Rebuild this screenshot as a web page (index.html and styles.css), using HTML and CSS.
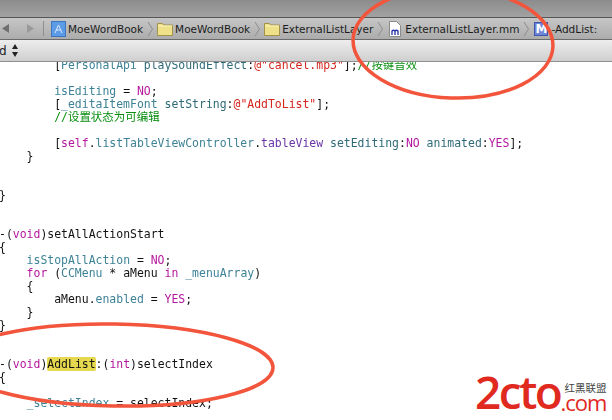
FILE: index.html
```html
<!DOCTYPE html>
<html lang="en">
<head>
<meta charset="utf-8">
<title>ExternalListLayer.mm</title>
<link rel="stylesheet" href="styles.css">
</head>
<body>
<div class="window">
  <div class="titlebar"></div>
  <nav class="jumpbar">
    <div class="nav-arrows">
      <svg class="arrow" width="9" height="11" viewBox="0 0 9 11"><path d="M8 1v9L1 5.500z"/></svg>
      <svg class="arrow arrow-off" width="9" height="11" viewBox="0 0 9 11"><path d="M1 1v9l7-4.500z"/></svg>
    </div>
    <span class="divider"></span>
    <svg class="icon" width="15" height="16" viewBox="0 0 15 16"><rect x=".5" y=".5" width="14" height="15" fill="#5c9be6" stroke="#3f74c0"/><path d="M4 12l3.500-8L11 12M5 9h5" fill="none" stroke="#dbe9fb" stroke-width="1"/></svg>
    <span class="crumb crumb-first">MoeWordBook</span>
    <svg class="chev" width="7" height="16" viewBox="0 0 7 16"><path d="M1 1l4.500 7L1 15" fill="none" stroke="#8d8d8d"/></svg>
    <svg class="icon" width="16" height="14" viewBox="0 0 16 14"><path d="M.5 13.500V1.500h5l1 1.500h9v10.500z" fill="#efe08a" stroke="#a3924a"/><path d="M1 4h14" stroke="#fbf3bd"/></svg>
    <span class="crumb">MoeWordBook</span>
    <svg class="chev" width="7" height="16" viewBox="0 0 7 16"><path d="M1 1l4.500 7L1 15" fill="none" stroke="#8d8d8d"/></svg>
    <svg class="icon" width="16" height="14" viewBox="0 0 16 14"><path d="M.5 13.500V1.500h5l1 1.500h9v10.500z" fill="#efe08a" stroke="#a3924a"/><path d="M1 4h14" stroke="#fbf3bd"/></svg>
    <span class="crumb">ExternalListLayer</span>
    <svg class="chev chev-file" width="7" height="16" viewBox="0 0 7 16"><path d="M1 1l4.500 7L1 15" fill="none" stroke="#8d8d8d"/></svg>
    <svg class="icon" width="12" height="16" viewBox="0 0 12 16"><path d="M.5.500h7l4 4v11H.5z" fill="#fff" stroke="#8a8a8a"/><rect x="1.500" y="7" width="9" height="7" fill="#fff"/><path d="M3 14V9.500M3 10q1.500-1.500 3 0v4M6 10q1.500-1.500 3 0v4" fill="none" stroke="#1f2fa8" stroke-width="1.300"/></svg>
    <span class="crumb crumb-file">ExternalListLayer.mm</span>
    <svg class="chev chev-method" width="7" height="16" viewBox="0 0 7 16"><path d="M1 1l4.500 7L1 15" fill="none" stroke="#8d8d8d"/></svg>
    <span class="method-badge">M</span>
    <span class="crumb crumb-last">-AddList:</span>
  </nav>
  <div class="filterbar">
    <span class="filter-text">d</span>
    <svg class="stepper" width="6" height="13" viewBox="0 0 6 13"><path d="M3 0l3 5H0zM0 8h6l-3 5z"/></svg>
  </div>
  <main class="editor">
<pre class="code"><code>        [<span class="iv">PersonalApi</span> <span class="me">playSoundEffect</span>:<span class="st">@"cancel.mp3"</span>];<span class="co">//按键音效</span>

        <span class="iv">isEditing</span> = <span class="kw">NO</span>;
        [<span class="iv">_editaItemFont</span> <span class="me">setString</span>:<span class="st">@"AddToList"</span>];
        <span class="co">//设置状态为可编辑</span>

        [<span class="kw">self</span>.<span class="iv">listTableViewController</span>.<span class="pu">tableView</span> <span class="me">setEditing</span>:<span class="kw">NO</span> <span class="me">animated</span>:<span class="kw">YES</span>];
    }


}


-(<span class="kw">void</span>)setAllActionStart
{
    <span class="iv">isStopAllAction</span> = <span class="kw">NO</span>;
    <span class="kw">for</span> (<span class="iv">CCMenu</span> * aMenu <span class="kw">in</span> <span class="iv">_menuArray</span>)
    {
        aMenu.<span class="iv">enabled</span> = <span class="kw">YES</span>;
    }
}


-(<span class="kw">void</span>)<mark class="hit">AddList</mark>:(<span class="kw">int</span>)selectIndex
{

    <span class="iv">_selectIndex</span> = selectIndex;</code></pre>
  </main>
  <svg class="annotations" width="612" height="420" viewBox="0 0 612 420">
    <ellipse class="ring" cx="453" cy="43" rx="100" ry="55" transform="rotate(2 453 43)"/>
    <ellipse class="ring" cx="114" cy="365" rx="159" ry="41" transform="rotate(1 114 365)"/>
  </svg>
  <div class="watermark">
    <span class="wm-main">2cto</span>
    <span class="wm-side">
      <span class="wm-cn">红黑联盟</span>
      <span class="wm-com">.com</span>
    </span>
  </div>
</div>
</body>
</html>
```

FILE: styles.css
```css
* { box-sizing: border-box; }
html, body { margin: 0; padding: 0; background: #fff; }
.window {
  position: relative;
  width: 612px;
  height: 420px;
  overflow: hidden;
  display: flex;
  flex-direction: column;
  font-family: "DejaVu Sans", sans-serif;
}
.titlebar {
  height: 18px;
  flex: none;
  background: linear-gradient(#8c8c8c, #a2a2a2);
  border-bottom: 1px solid #555;
}
.jumpbar {
  height: 22px;
  flex: none;
  display: flex;
  align-items: center;
  background: linear-gradient(#c6c6c6, #acacac);
  border-bottom: 1px solid #6a6a6a;
  white-space: nowrap;
  padding-left: 1px;
}
.nav-arrows { display: flex; gap: 16px; width: 42px; flex: none; }
.arrow { fill: #6f6f6f; flex: none; }
.arrow-off { fill: #9a9a9a; }
.divider { width: 1px; height: 15px; background: #8e8e8e; margin-right: 7px; flex: none; }
.icon { flex: none; }
.crumb { font-size: 10.500px; color: #1c1c1c; margin-left: 2px; }
.crumb-first { margin-left: 2px; }
.crumb-file { margin-left: 4px; }
.chev { flex: none; margin: 0 3px 0 4px; }
.chev-file { margin: 0 5px 0 4px; }
.chev-method { margin: 0 4px 0 4px; }
.method-badge {
  flex: none;
  width: 14px;
  height: 14px;
  background: #6f86d8;
  border: 1px solid #3e55ad;
  color: #fff;
  font-size: 12px;
  font-weight: bold;
  line-height: 12px;
  text-align: center;
}
.crumb-last { margin-left: 3px; }
.filterbar {
  height: 22px;
  flex: none;
  display: flex;
  align-items: center;
  gap: 5px;
  background: linear-gradient(#ededed, #cfcfcf);
  border-bottom: 1px solid #8f8f8f;
}
.filter-text { font-size: 12px; color: #222; margin-left: -1px; }
.stepper { fill: #222; flex: none; }
.editor { flex: 1; min-height: 0; background: #fff; overflow: hidden; }
.code {
  margin: -3px 0 0 -1px;
  font-family: "DejaVu Sans Mono", "Noto Sans CJK SC", monospace;
  font-size: 11.460px;
  line-height: 13px;
  color: #111;
  filter: blur(.3px);
}
.code code { font: inherit; }
.iv { color: #3d8296; }
.me { color: #2f6a78; }
.kw { color: #b5179e; }
.st { color: #d3261d; }
.co { color: #0b8f12; }
.pu { color: #6a35a8; }
.hit { background: #e6d94f; color: #111; border-radius: 2px; }
.annotations { position: absolute; left: 0; top: 0; pointer-events: none; }
.ring { fill: none; stroke: #f2553c; stroke-width: 3.500; }
.watermark {
  position: absolute;
  left: 475px;
  top: 366px;
  display: flex;
  color: #e0291f;
}
.wm-main { font-family: "Open Sans", sans-serif; font-size: 46px; line-height: 50px; letter-spacing: -2.500px; font-weight: 600; }
.wm-side { display: flex; flex-direction: column; padding-top: 16px; }
.wm-cn { font-family: "Noto Sans CJK SC", sans-serif; font-size: 10.500px; line-height: 12px; color: #444; padding-left: 4px; }
.wm-com { font-family: "Open Sans", sans-serif; font-size: 22px; line-height: 17px; letter-spacing: -1px; }
```
